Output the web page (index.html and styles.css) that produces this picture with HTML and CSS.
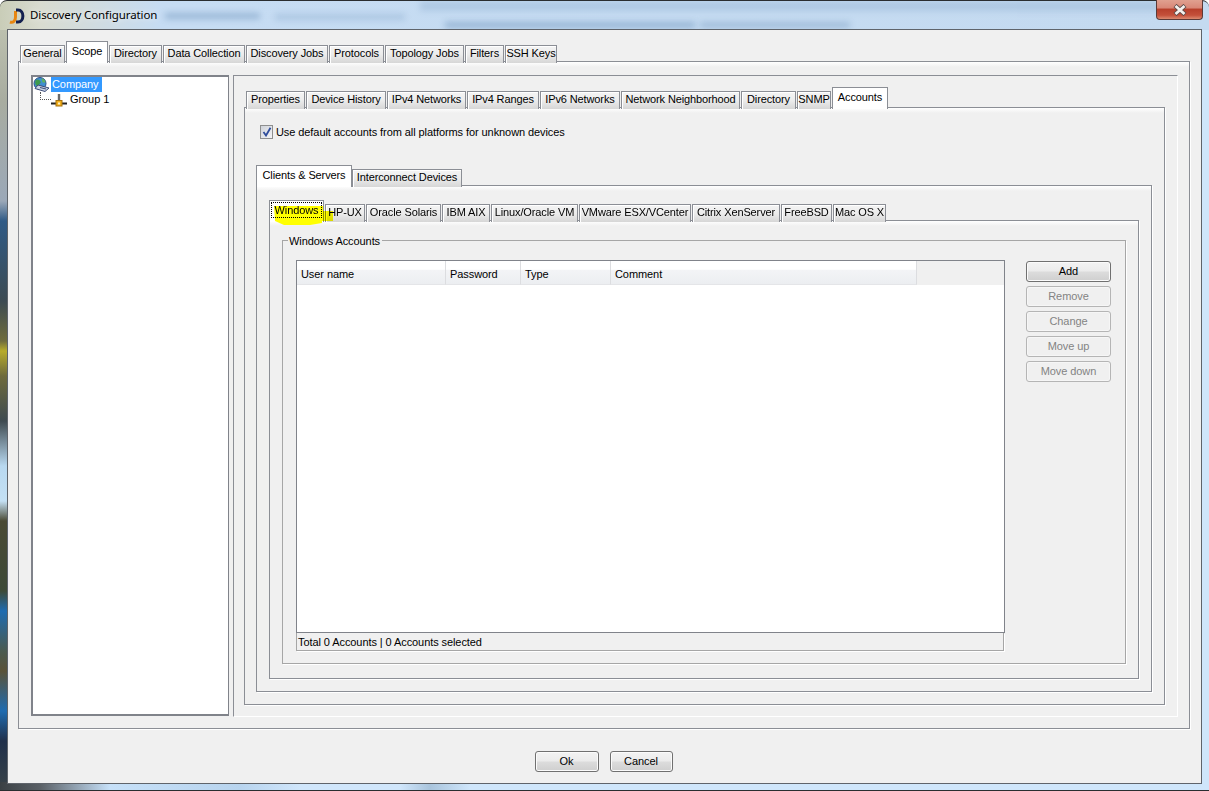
FILE: index.html
```html
<!DOCTYPE html>
<html lang="en">

<head>
    <meta charset="UTF-8">
    <title>Discovery Configuration</title>
    <link rel="stylesheet" href="styles.css">
</head>

<body>
    <div class="window">
        <!-- aero glass: blurred stuff behind the title bar -->
        <div class="glass">
            <div class="smear smear1"></div>
            <div class="smear smear2"></div>
            <div class="smear smear3"></div>
            <div class="smear smear4"></div>
            <div class="smear smear5"></div>
        </div>

        <header class="titlebar">
            <svg class="logo" width="16" height="16" viewBox="0 0 16 16">
                <path d="M1 14 C4 15 6.5 13 6.5 9 V3" fill="none" stroke="#e8860f" stroke-width="3" />
                <path d="M7 2 H9 C15.5 2 15.5 14 9 14 H7" fill="none" stroke="#13204f" stroke-width="3" />
            </svg>
            <span class="titlebar-text">Discovery Configuration</span>
            <div class="close-btn">
                <svg width="16" height="12" viewBox="0 0 16 12">
                    <path d="M3 1.5 L13 10.5 M13 1.5 L3 10.5" stroke="#5c4a48" stroke-width="4.4" />
                    <path d="M3.5 2 L12.5 10 M12.5 2 L3.5 10" stroke="#f4f1ee" stroke-width="2.8" />
                </svg>
            </div>
        </header>

        <div class="client">
            <div class="tabbar tabbar-main">
                <div class="tab">General</div>
                <div class="tab selected">Scope</div>
                <div class="tab">Directory</div>
                <div class="tab">Data Collection</div>
                <div class="tab">Discovery Jobs</div>
                <div class="tab">Protocols</div>
                <div class="tab">Topology Jobs</div>
                <div class="tab">Filters</div>
                <div class="tab">SSH Keys</div>
            </div>
            <section class="pane pane-main">
                <div class="tree">
                    <div class="tree-row">
                        <svg class="tree-icon" width="17" height="15" viewBox="0 0 17 15">
                            <circle cx="7" cy="6.5" r="6" fill="#3f8fd0" stroke="#2b4f86" />
                            <path d="M2.5 3.5 C4.5 1.5 6.5 2.5 7.5 4.5 C8.5 6.5 5.5 7.5 4.5 9.5 C2.5 8.5 1.5 5.5 2.5 3.5Z" fill="#3e9a4e" />
                            <path d="M8.5 1.5 C10.5 1.5 12.5 3.5 12.5 5.5 L9.5 5.5Z" fill="#5fb35f" />
                            <path d="M5 8 L16 11 L12 14.5 L2 11.5Z" fill="#c9d3e4" stroke="#3c4c78" />
                            <path d="M7 10.5 L13 12" stroke="#3c4c78" />
                        </svg>
                        <span class="tree-label active">Company</span>
                    </div>
                    <div class="tree-row child">
                        <span class="tree-line"></span>
                        <svg class="tree-icon" width="16" height="14" viewBox="0 0 16 14">
                            <path d="M8 1 V8" stroke="#6a6a6a" stroke-width="2.4" />
                            <path d="M0 10.5 H16" stroke="#222" stroke-width="2" />
                            <rect x="5" y="7.5" width="6" height="5.5" fill="#f3b01c" stroke="#a8730d" />
                            <rect x="7" y="9.5" width="2" height="2" fill="#fff2c0" />
                        </svg>
                        <span class="tree-label">Group 1</span>
                    </div>
                </div>

                <div class="scope-panel">
                    <div class="tabbar tabbar-scope">
                        <div class="tab">Properties</div>
                        <div class="tab">Device History</div>
                        <div class="tab">IPv4 Networks</div>
                        <div class="tab">IPv4 Ranges</div>
                        <div class="tab">IPv6 Networks</div>
                        <div class="tab">Network Neighborhood</div>
                        <div class="tab">Directory</div>
                        <div class="tab">SNMP</div>
                        <div class="tab selected">Accounts</div>
                    </div>
                    <section class="pane pane-scope">
                        <label class="check-row">
                            <span class="checkbox">
                                <svg width="10" height="10" viewBox="0 0 10 10">
                                    <path d="M1.5 5 L4 8.5 L8.5 0.8" fill="none" stroke="#2f4d9c" stroke-width="1.8" />
                                </svg>
                            </span>
                            Use default accounts from all platforms for unknown devices
                        </label>

                        <div class="tabbar tabbar-device">
                            <div class="tab selected">Clients &amp; Servers</div>
                            <div class="tab">Interconnect Devices</div>
                        </div>
                        <section class="pane pane-device">
                            <div class="tabbar tabbar-os">
                                <div class="tab selected"><span class="focus">Windows</span></div>
                                <div class="tab">HP-UX</div>
                                <div class="tab">Oracle Solaris</div>
                                <div class="tab">IBM AIX</div>
                                <div class="tab">Linux/Oracle VM</div>
                                <div class="tab">VMware ESX/VCenter</div>
                                <div class="tab">Citrix XenServer</div>
                                <div class="tab">FreeBSD</div>
                                <div class="tab">Mac OS X</div>
                                <svg class="highlight" width="66" height="24" viewBox="0 0 66 24">
                                    <path d="M2 3 H51 V8 H61 V18 H50 V20 L38 22 L12 22 L3 18Z" fill="#ffff00" />
                                </svg>
                            </div>
                            <section class="pane pane-os">
                                <div class="groupbox">
                                    <span class="groupbox-title">Windows Accounts</span>
                                    <div class="accounts">
                                        <div class="table-box">
                                            <div class="table-head">
                                                <div class="col col-user">User name</div>
                                                <div class="col col-pass">Password</div>
                                                <div class="col col-type">Type</div>
                                                <div class="col col-comment">Comment</div>
                                            </div>
                                        </div>
                                        <div class="status">Total 0 Accounts | 0 Accounts selected</div>
                                    </div>
                                    <div class="side-buttons">
                                        <button class="btn">Add</button>
                                        <button class="btn" disabled>Remove</button>
                                        <button class="btn" disabled>Change</button>
                                        <button class="btn" disabled>Move up</button>
                                        <button class="btn" disabled>Move down</button>
                                    </div>
                                </div>
                            </section>
                        </section>
                    </section>
                </div>
            </section>

            <footer class="footer">
                <button class="btn btn-ok">Ok</button>
                <button class="btn btn-cancel">Cancel</button>
            </footer>
        </div>
    </div>
</body>

</html>
```

FILE: styles.css
```css
* {
    box-sizing: border-box;
}

body {
    margin: 0;
    padding: 0;
    width: 1209px;
    height: 791px;
    overflow: hidden;
    font-family: "Liberation Sans", sans-serif;
    font-size: 11px;
    letter-spacing: -0.08px;
    color: #000;
    background: #fff;
}

.window {
    position: relative;
    width: 1209px;
    height: 791px;
    padding: 0 7px 7px 7px;
    border-radius: 7px 7px 0 0;
    border-top: 1px solid #2a2d30;
    border-bottom: 1px solid #2a2d30;
    background:
        linear-gradient(to right, #c9cdb8 0, #d9dcd0 40px, #c6dcf3 160px, #c4daf0 100%) top / 100% 29px no-repeat,
        linear-gradient(to right, #3a4044 0, #5a6066 40px, #c6e0f8 110px, #b8d4ee 240px, #d0e6fb 300px, #d0e6fb 400px, #a9c4dc 430px, #cfe6fb 470px) bottom / 100% 8px no-repeat,
        linear-gradient(to right, #cfe6fb 0, #cfe6fb 100%) right / 8px 100% no-repeat,
        linear-gradient(to bottom, #c4c8b4 0, #a8aca0 100px, #9ba8b8 200px, #2f5a86 220px, #3c4a52 300px, #6f6c3c 340px, #b8ac2a 350px, #6e6a3c 375px, #3e4a50 420px, #b8d8f0 465px, #c4e0f4 500px, #4a4a34 520px, #3d4a38 590px, #1f6bb0 610px, #4a5a50 650px, #5a5238 670px, #1f6bb0 710px, #20304a 740px, #3a4448 791px) left / 8px 100% no-repeat;
}

/* title bar */
.glass {
    position: absolute;
    left: 0;
    top: 0;
    width: 100%;
    height: 28px;
    overflow: hidden;
    border-radius: 7px 7px 0 0;
}

.smear {
    position: absolute;
    height: 6px;
    background: #7c9fc4;
    filter: blur(3px);
}

.smear1 {
    left: 165px;
    top: 12px;
    width: 95px;
    opacity: 0.6;
}

.smear2 {
    left: 275px;
    top: 13px;
    width: 130px;
    opacity: 0.35;
}

.smear3 {
    left: 445px;
    top: 21px;
    width: 250px;
    opacity: 0.65;
}

.smear4 {
    left: 700px;
    top: 21px;
    width: 150px;
    opacity: 0.5;
}

.smear5 {
    left: 420px;
    top: 0;
    width: 740px;
    height: 10px;
    opacity: 0.3;
}

.titlebar {
    position: relative;
    display: flex;
    align-items: center;
    height: 28px;
    margin-left: 2px;
}

.logo {
    margin-top: 2px;
}

.titlebar-text {
    margin-left: 5px;
    margin-bottom: 2px;
    font-family: "Noto Sans", sans-serif;
    font-size: 11.5px;
    letter-spacing: -0.1px;
    color: #000;
    text-shadow: 0 0 6px rgba(255, 255, 255, 0.9);
}

.close-btn {
    position: absolute;
    right: -1px;
    top: -1px;
    display: flex;
    align-items: center;
    justify-content: center;
    width: 47px;
    height: 20px;
    border: 1px solid #5a3a38;
    border-top: 0;
    border-radius: 0 0 4px 4px;
    background: linear-gradient(to bottom, #e0a090 0, #d98878 40%, #b8402c 50%, #c4503a 80%, #dc8a70 100%);
}

.client {
    position: relative;
    display: flex;
    flex-direction: column;
    width: 1195px;
    height: 755px;
    padding: 11px 0 0 10px;
    border: 1px solid #5f646b;
    background: #f0f0f0;
}

/* tabs */
.tabbar {
    position: relative;
    z-index: 1;
    display: grid;
    align-items: end;
    gap: 1px;
    height: 20px;
}

.tabbar-main {
    grid-template-columns: 45px 42px 53px 82px 82px 55px 79px 39px 52px;
    padding-left: 2px;
}

.tabbar-scope {
    grid-template-columns: 59px 80px 79px 72px 80px 119px 55px 34px 56px;
    padding-left: 2px;
}

.tabbar-device {
    grid-template-columns: 96px 110px;
    gap: 0;
    margin-top: 26px;
}

.tabbar-os {
    grid-template-columns: 55px 40px 75px 48px 87px 112px 88px 51px 53px;
}

.tab {
    display: flex;
    align-items: center;
    justify-content: center;
    height: 18px;
    margin-bottom: -1px;
    padding-bottom: 3px;
    border: 1px solid #8b8e95;
    border-bottom: 0;
    letter-spacing: -0.12px;
    white-space: nowrap;
    background: linear-gradient(to bottom, #f4f4f4 0, #ececec 50%, #d6d6d6 100%);
    box-shadow: inset 1px 1px 0 #fff;
}

.tab.selected {
    position: relative;
    z-index: 1;
    height: 22px;
    padding-bottom: 3px;
    background: #fff;
    box-shadow: none;
}

.focus {
    display: flex;
    align-items: center;
    justify-content: center;
    width: 51px;
    height: 16px;
    outline: 1px dotted #000;
    outline-offset: -1px;
}

.highlight {
    position: absolute;
    left: 0;
    top: 3px;
    margin-left: 3px;
    mix-blend-mode: multiply;
    z-index: 2;
}

.pane {
    border: 1px solid #8b8e95;
    background: linear-gradient(to bottom, #fff 0, #f0f0f0 5px);
    box-shadow: 1px 1px 0 #fff;
}

.pane-main {
    display: flex;
    align-items: flex-start;
    width: 1172px;
    height: 668px;
    padding: 13px 0 0 12px;
}

.pane-scope {
    width: 921px;
    height: 598px;
    padding: 17px 0 0 11px;
}

.pane-device {
    width: 896px;
    height: 507px;
    padding: 14px 0 0 12px;
}

.pane-os {
    width: 870px;
    height: 459px;
    padding: 19px 0 0 12px;
}

/* tree on the left */
.tree {
    width: 198px;
    height: 641px;
    border: 1px solid #80838a;
    border-width: 2px 1px 2px 2px;
    background: #fff;
    flex: none;
}

.tree-row {
    position: relative;
    display: flex;
    align-items: center;
    height: 15px;
}

.tree-row.child {
    padding-left: 18px;
}

.tree-line {
    position: absolute;
    left: 7px;
    top: 0;
    width: 11px;
    height: 8px;
    border-left: 1px dotted #555;
    border-bottom: 1px dotted #555;
}

.tree-icon {
    flex: none;
}

.tree-label {
    padding: 0 2px 0 2px;
    line-height: 15px;
    margin-left: 1px;
}

.tree-label.active {
    padding: 0 3px 0 1px;
    color: #fff;
    background: #3399ff;
}

.scope-panel {
    flex: none;
    width: 945px;
    height: 642px;
    margin-left: 4px;
    padding: 11px 0 0 10px;
    border: 1px solid #8b8e95;
    border-right-color: #fff;
    border-bottom-color: #fff;
}

/* checkbox row */
.check-row {
    display: flex;
    align-items: center;
    height: 14px;
    margin-left: 4px;
}

.checkbox {
    display: flex;
    align-items: center;
    justify-content: center;
    width: 13px;
    height: 14px;
    margin-right: 3px;
    border: 1px solid #8e8f8f;
    background: linear-gradient(135deg, #cfd3da, #f4f4f6);
}

/* group box and table */
.groupbox {
    position: relative;
    display: flex;
    align-items: flex-start;
    width: 844px;
    height: 424px;
    padding: 19px 0 0 13px;
    border: 1px solid #a6a6a6;
    box-shadow: 1px 1px 0 #fff;
}

.groupbox-title {
    position: absolute;
    left: 5px;
    top: -6px;
    padding: 0 2px 0 1px;
    line-height: 13px;
    background: #f0f0f0;
}

.accounts {
    flex: none;
    width: 709px;
}

.table-box {
    height: 373px;
    border: 1px solid #80838a;
    background: #fff;
}

.table-head {
    display: flex;
    height: 24px;
    background: #f0f0f0;
}

.col {
    display: flex;
    align-items: center;
    padding: 2px 0 0 4px;
    border-right: 1px solid #dcdde0;
    border-bottom: 1px solid #e4e5e8;
    background: linear-gradient(to bottom, #fff 0, #fff 36%, #f3f4f6 40%, #eceef1 100%);
}

.col-user {
    width: 149px;
}

.col-pass {
    width: 75px;
}

.col-type {
    width: 90px;
}

.col-comment {
    width: 306px;
}

.status {
    width: 708px;
    height: 18px;
    padding: 1px 0 0 1px;
    line-height: 16px;
    border: 1px solid #a6a6a6;
    border-top: 0;
    box-shadow: 1px 1px 0 #fff;
}

.side-buttons {
    display: flex;
    flex-direction: column;
    gap: 4px;
    width: 85px;
    margin: 1px 0 0 21px;
}

/* buttons */
.btn {
    height: 21px;
    padding: 0 0 2px;
    font-family: inherit;
    font-size: 11px;
    letter-spacing: inherit;
    color: #000;
    border: 1px solid #707070;
    border-radius: 3px;
    background: linear-gradient(to bottom, #f3f3f3 0, #ebebeb 48%, #dcdcdc 52%, #cfcfcf 100%);
    box-shadow: inset 0 0 0 1px #fbfbfb;
}

.btn:disabled {
    color: #838383;
    border-color: #b5b5b5;
    background: #f0f0f0;
    box-shadow: inset 0 0 0 1px #f6f6f6;
}

.footer {
    display: flex;
    justify-content: center;
    gap: 11px;
    margin-top: 22px;
    padding-right: 12px;
}

.btn-ok {
    width: 64px;
}

.btn-cancel {
    width: 63px;
}
```
